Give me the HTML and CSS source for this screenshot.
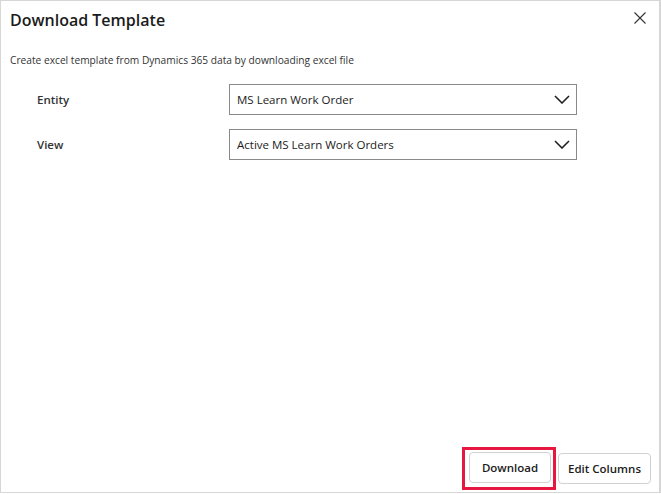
FILE: index.html
```html
<!DOCTYPE html>
<html lang="en">

<head>
  <meta charset="UTF-8">
  <meta name="viewport" content="width=device-width, initial-scale=1.0">
  <title>Download Template</title>
  <link rel="stylesheet" href="styles.css">
</head>

<body>
  <div class="dialog">
    <div class="header">
      <div class="title">Download Template</div>
      <button class="close" aria-label="Close">
        <svg width="12" height="12" viewBox="0 0 12 12">
          <path d="M0.5 0.5L11.5 11.5M11.5 0.5L0.5 11.5" stroke="#333" stroke-width="1.1" fill="none" />
        </svg>
      </button>
    </div>
    <div class="subtitle">Create excel template from Dynamics 365 data by downloading excel file</div>
    <div class="form">
      <div class="row">
        <div class="label">Entity</div>
        <div class="select">
          <span>MS Learn Work Order</span>
          <svg class="chevron" width="16" height="9" viewBox="0 0 16 9">
            <path d="M1 1L8 8L15 1" stroke="#222" stroke-width="1.6" fill="none" />
          </svg>
        </div>
      </div>
      <div class="row">
        <div class="label">View</div>
        <div class="select">
          <span>Active MS Learn Work Orders</span>
          <svg class="chevron" width="16" height="9" viewBox="0 0 16 9">
            <path d="M1 1L8 8L15 1" stroke="#222" stroke-width="1.6" fill="none" />
          </svg>
        </div>
      </div>
    </div>
    <div class="footer">
      <div class="highlight">
        <button class="btn">Download</button>
      </div>
      <button class="btn">Edit Columns</button>
    </div>
  </div>
</body>

</html>
```

FILE: styles.css
```css
* {
  box-sizing: border-box;
}

html,
body {
  margin: 0;
  padding: 0;
  background: #fff;
}

body {
  font-family: "Segoe UI", "Open Sans", sans-serif;
  color: #222;
}

.dialog {
  width: 661px;
  height: 493px;
  border: 1px solid #d6d6d6;
  border-right-width: 2px;
  display: flex;
  flex-direction: column;
}

.header {
  display: flex;
  justify-content: space-between;
  align-items: flex-start;
  padding: 7px 13px 0 9px;
}

.title {
  font-size: 16px;
  font-weight: 600;
  color: #1b1b1b;
  line-height: 24px;
}

.close {
  border: none;
  background: none;
  padding: 0;
  margin-top: 4px;
  width: 12px;
  height: 12px;
  display: flex;
}

.subtitle {
  font-size: 10.2px;
  color: #333;
  padding: 20px 0 0 9px;
  line-height: 16px;
}

.form {
  display: flex;
  flex-direction: column;
  gap: 14px;
  padding: 16px 0 0 36px;
}

.row {
  display: flex;
  align-items: center;
}

.label {
  width: 192px;
  font-size: 11.5px;
  font-weight: 600;
  color: #333;
}

.select {
  width: 348px;
  height: 31px;
  border: 1px solid #8a8a8a;
  display: flex;
  align-items: center;
  justify-content: space-between;
  padding: 0 6px 0 7px;
  font-size: 11.5px;
  color: #1b1b1b;
}

.chevron {
  display: block;
}

.footer {
  margin-top: auto;
  display: flex;
  justify-content: flex-end;
  align-items: center;
  gap: 2px;
  padding: 0 8px 2px 0;
}

.highlight {
  border: 3px solid #e8173f;
  padding: 2px 2px 4px 4px;
}

.btn {
  font-family: inherit;
  font-size: 11.5px;
  font-weight: 600;
  color: #1b1b1b;
  background: #fff;
  border: 1px solid #d1d1d1;
  border-radius: 4px;
  height: 31px;
  padding: 0 4px;
  white-space: nowrap;
}

.highlight .btn {
  width: 82px;
  display: block;
}

.footer > .btn {
  width: 93px;
}
```
